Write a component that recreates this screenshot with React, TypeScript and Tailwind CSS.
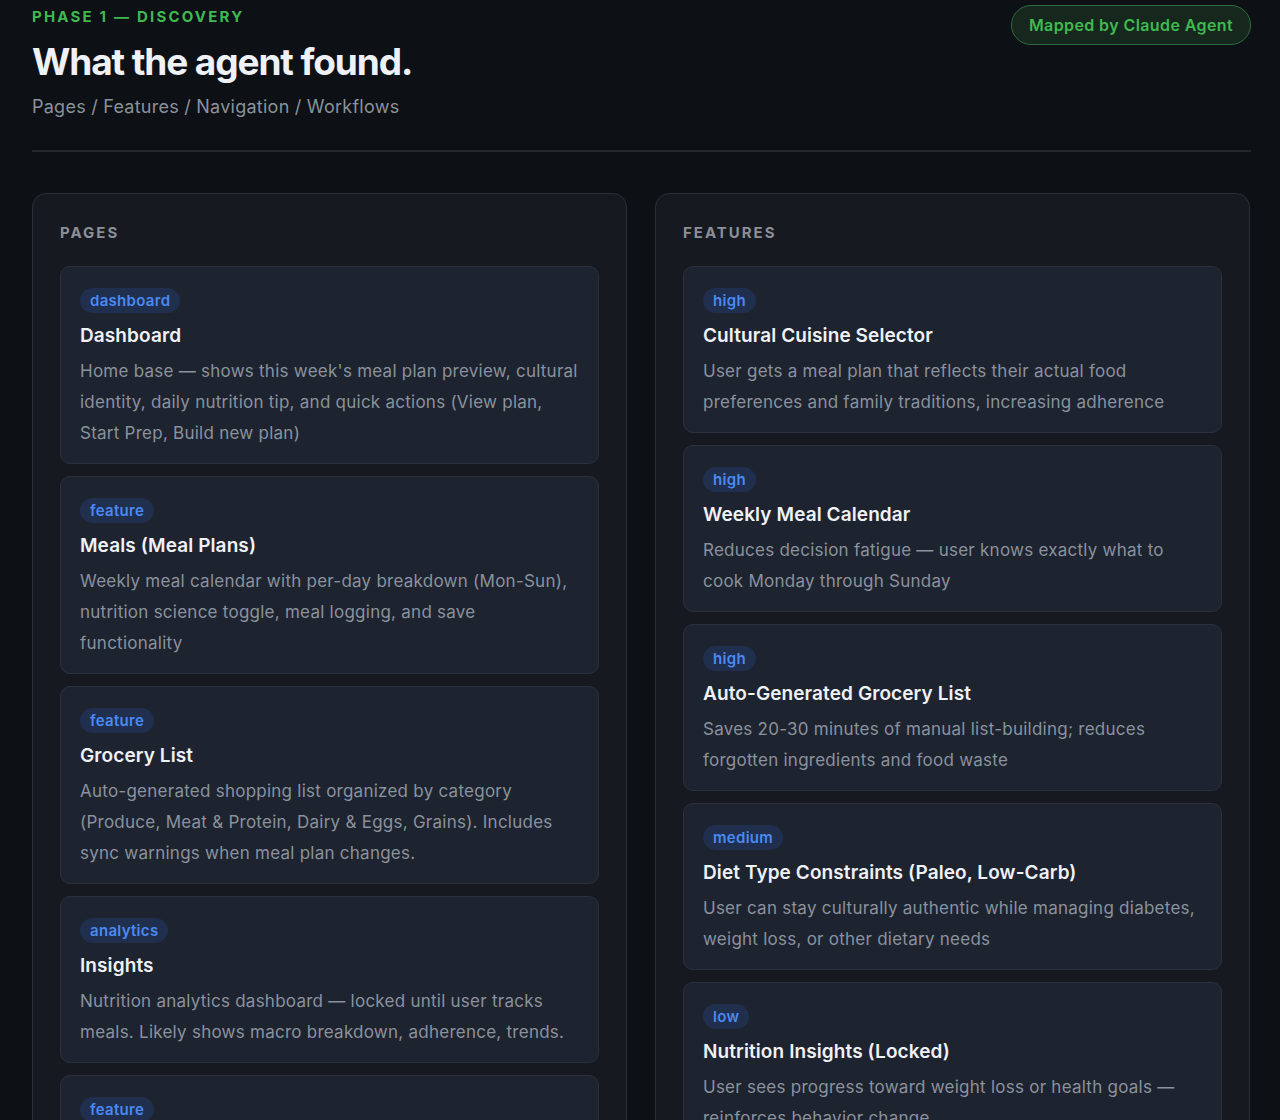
import React from "react";

type Item = { tag: string; title: string; desc: string };

const pages: Item[] = [
  {
    tag: "dashboard",
    title: "Dashboard",
    desc: "Home base — shows this week's meal plan preview, cultural identity, daily nutrition tip, and quick actions (View plan, Start Prep, Build new plan)",
  },
  {
    tag: "feature",
    title: "Meals (Meal Plans)",
    desc: "Weekly meal calendar with per-day breakdown (Mon-Sun), nutrition science toggle, meal logging, and save functionality",
  },
  {
    tag: "feature",
    title: "Grocery List",
    desc: "Auto-generated shopping list organized by category (Produce, Meat & Protein, Dairy & Eggs, Grains). Includes sync warnings when meal plan changes.",
  },
  {
    tag: "analytics",
    title: "Insights",
    desc: "Nutrition analytics dashboard — locked until user tracks meals. Likely shows macro breakdown, adherence, trends.",
  },
  {
    tag: "feature",
    title: "Prep Mode",
    desc: "Step-by-step cooking guidance for batch prep sessions, organized by recipe and time.",
  },
];

const features: Item[] = [
  {
    tag: "high",
    title: "Cultural Cuisine Selector",
    desc: "User gets a meal plan that reflects their actual food preferences and family traditions, increasing adherence",
  },
  {
    tag: "high",
    title: "Weekly Meal Calendar",
    desc: "Reduces decision fatigue — user knows exactly what to cook Monday through Sunday",
  },
  {
    tag: "high",
    title: "Auto-Generated Grocery List",
    desc: "Saves 20-30 minutes of manual list-building; reduces forgotten ingredients and food waste",
  },
  {
    tag: "medium",
    title: "Diet Type Constraints (Paleo, Low-Carb)",
    desc: "User can stay culturally authentic while managing diabetes, weight loss, or other dietary needs",
  },
  {
    tag: "low",
    title: "Nutrition Insights (Locked)",
    desc: "User sees progress toward weight loss or health goals — reinforces behavior change",
  },
];

function Card({ item }: { item: Item }) {
  return (
    <div className="rounded-[10px] border border-[#2b313c] bg-[#1e2330] pl-[19px] pr-[19px] pt-[21px] pb-[14px]">
      <span className="inline-flex h-[25px] items-center rounded-full bg-[#1f2f4d] px-[10px] text-[15px] font-semibold leading-none tracking-[0.3px] text-[#4a8af4]">
        {item.tag}
      </span>
      <div className="mt-[11px] text-[19px] font-semibold leading-[24px] tracking-[0.1px] text-[#eef1f5]">
        {item.title}
      </div>
      <p className="mt-[8px] text-[17px] leading-[31px] tracking-[0.25px] text-[#8a929d]">{item.desc}</p>
    </div>
  );
}

function Panel({ label, items }: { label: string; items: Item[] }) {
  return (
    <div className="rounded-[14px] border border-[#2a2f37] bg-[#161a20] px-[27px] pt-[28px]">
      <div className="text-[15px] font-bold uppercase leading-[22px] tracking-[2px] text-[#8a8f98]">
        {label}
      </div>
      <div className="mt-[22px] flex flex-col gap-[12px]">
        {items.map((it, i) => (
          <Card key={i} item={it} />
        ))}
      </div>
    </div>
  );
}

export default function App() {
  return (
    <div className="h-[1120px] overflow-hidden bg-[#0d1014] pl-[32px] pr-[29px] font-['Inter','Noto_Sans',sans-serif]">
      <div className="flex items-start justify-between">
        <div>
          <div className="pt-[7px] text-[15px] font-bold uppercase leading-[20px] tracking-[2.2px] text-[#3fb950]">
            Phase 1 — Discovery
          </div>
          <h1 className="mt-[12px] text-[37px] font-bold leading-[46px] tracking-[-1.1px] text-[#eef1f5]">
            What the agent found.
          </h1>
          <div className="mt-[9px] text-[18px] leading-[26px] tracking-[0.25px] text-[#8a929d]">
            Pages / Features / Navigation / Workflows
          </div>
        </div>
        <div className="mt-[5px] flex h-[40px] items-center rounded-full border border-[#2f6b3c] bg-[#16281d] px-[17px] text-[16px] font-semibold tracking-[0.4px] text-[#3fb950]">
          Mapped by Claude Agent
        </div>
      </div>
      <div className="mt-[30px] h-[2px] bg-[#24282e]" />
      <div className="mt-[41px] grid grid-cols-2 gap-[28px] pr-[1px]">
        <Panel label="Pages" items={pages} />
        <Panel label="Features" items={features} />
      </div>
    </div>
  );
}
